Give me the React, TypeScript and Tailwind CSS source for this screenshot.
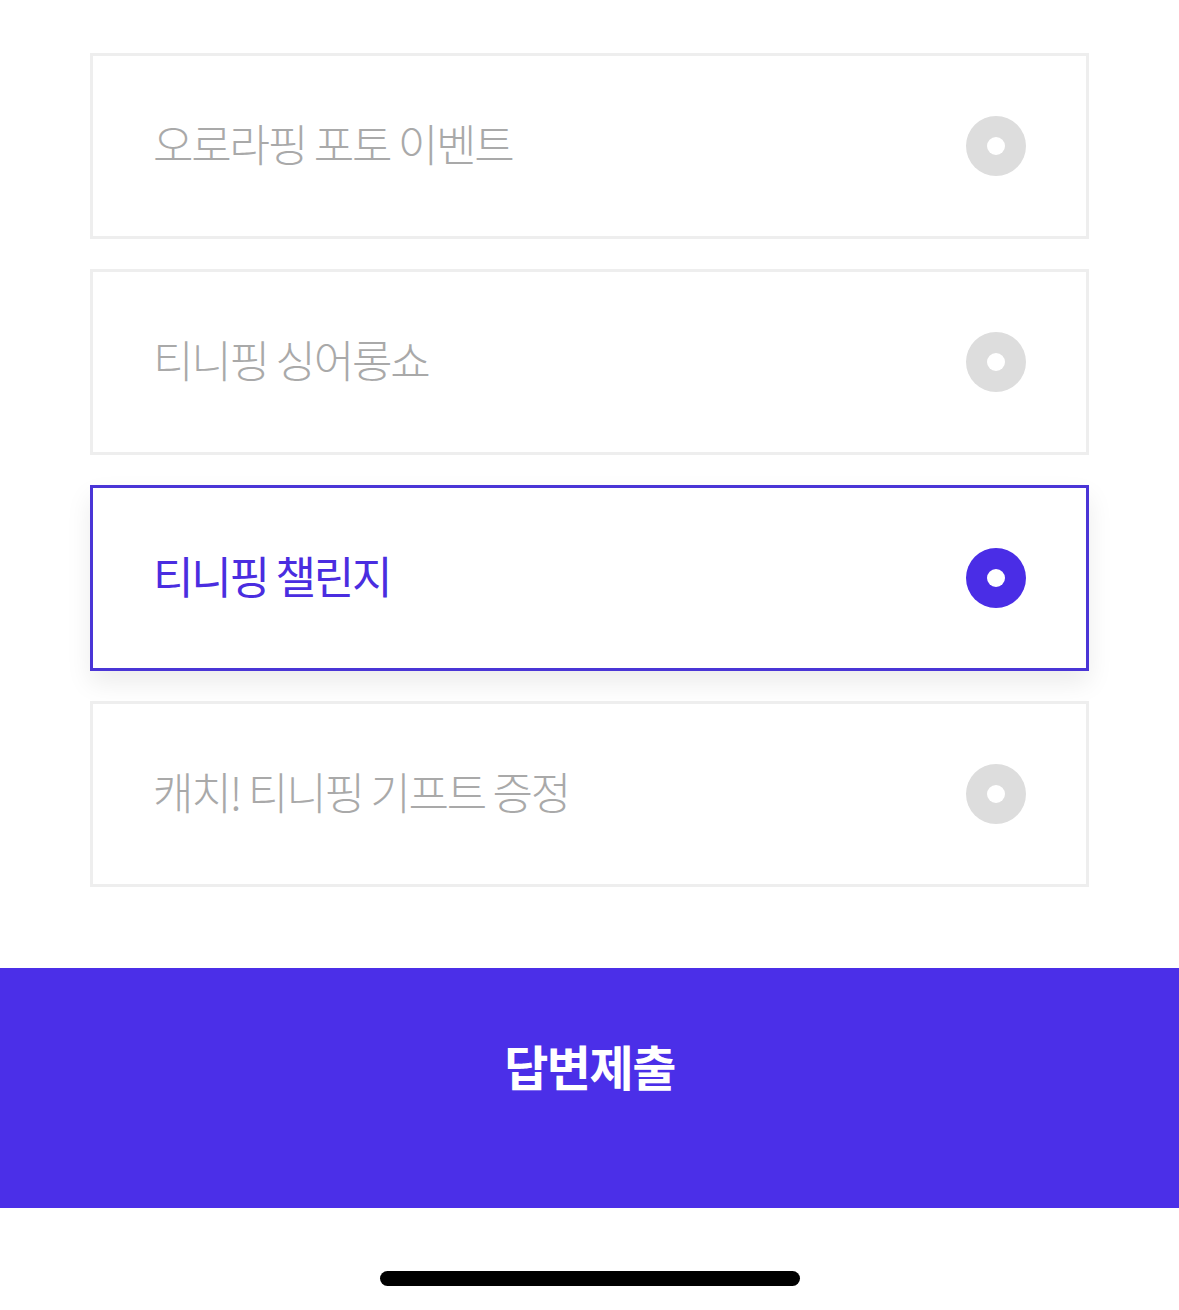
import React, { useState } from "react";

const options = ["오로라핑 포토 이벤트", "티니핑 싱어롱쇼", "티니핑 챌린지", "캐치! 티니핑 기프트 증정"];

const Radio: React.FC<{ on: boolean }> = ({ on }) => (
  <span
    className={`flex items-center justify-center w-[60px] h-[60px] rounded-full shrink-0 ${
      on ? "bg-[#4a2de6]" : "bg-[#dddddd]"
    }`}
  >
    <span className="w-[18px] h-[18px] rounded-full bg-white" />
  </span>
);

export default function App() {
  const [selected, setSelected] = useState(2);

  return (
    <div className="w-[1179px] h-[1310px] bg-white flex flex-col" style={{ fontFamily: '"Noto Sans CJK KR", "Noto Sans", sans-serif' }}>
      {/* Options */}
      <div className="flex flex-col gap-[30px] px-[90px] pt-[53px]">
        {options.map((label, i) => {
          const on = i === selected;
          return (
            <button
              key={label}
              onClick={() => setSelected(i)}
              className={`h-[186px] flex items-center justify-between pl-[60px] pr-[60px] bg-white border-[3px] text-left ${
                on
                  ? "border-[#4a35d6] shadow-[0_12px_24px_rgba(0,0,0,0.08)]"
                  : "border-[#eeeeee]"
              }`}
            >
              <span
                className={`text-[44px] leading-none tracking-[-2.2px] mb-[6px] ${
                  on ? "text-[#4a2de0] font-normal" : "text-[#a9a9a9] font-light"
                }`}
              >
                {label}
              </span>
              <Radio on={on} />
            </button>
          );
        })}
      </div>

      {/* Submit */}
      <div className="mt-[81px] h-[240px] bg-[#4b2fe8] flex justify-center pt-[73px]">
        <span className="text-white text-[48px] font-bold leading-none tracking-[-1.5px]">답변제출</span>
      </div>

      {/* Home indicator */}
      <div className="flex-1 flex justify-center pt-[63px]">
        <div className="w-[420px] h-[15px] rounded-full bg-black" />
      </div>
    </div>
  );
}
